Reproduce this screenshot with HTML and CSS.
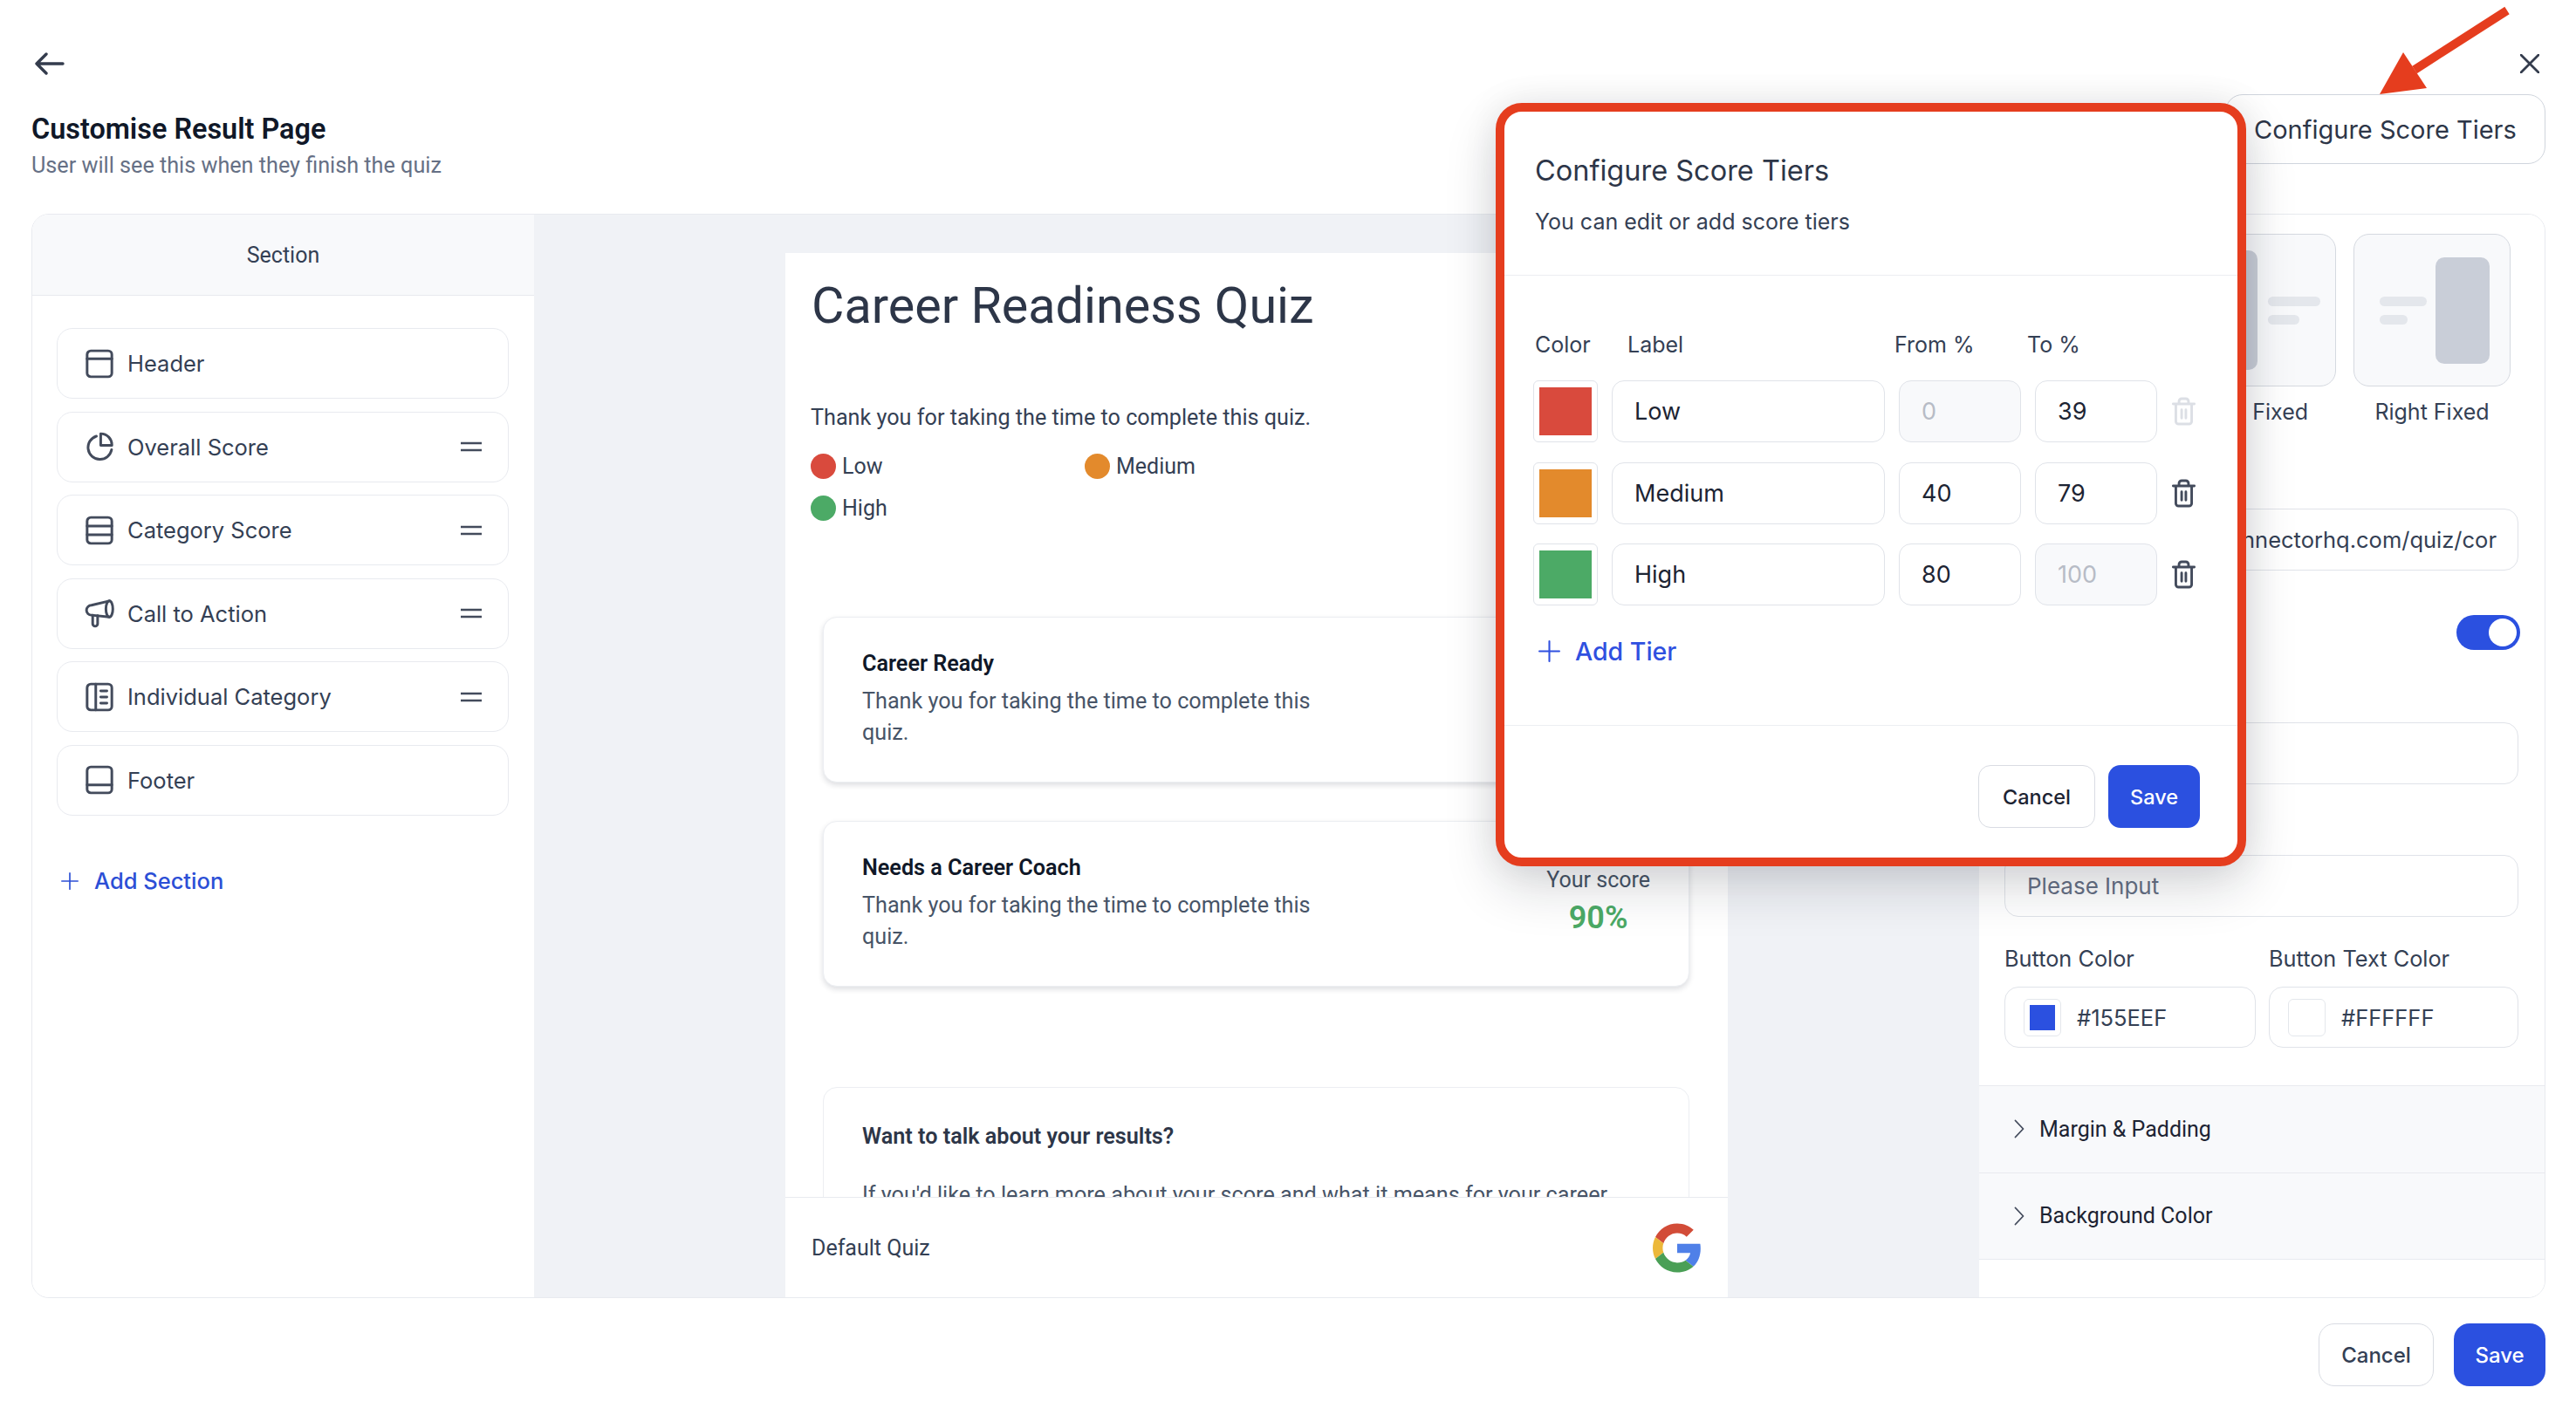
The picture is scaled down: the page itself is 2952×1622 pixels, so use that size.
FILE: index.html
```html
<!DOCTYPE html>
<html lang="en">
<head>
<meta charset="utf-8">
<title>Customise Result Page</title>
<link rel="stylesheet" href="styles.css">
</head>
<body>
<svg class="defs" width="0" height="0" aria-hidden="true">
  <symbol id="trash" viewBox="0 0 24 27"><path d="M2 6.500h20M7.500 6.500V4A2.500 2.500 0 0 1 10 1.500h4A2.500 2.500 0 0 1 16.500 4v2.500M4.500 6.500v16.500A2.500 2.500 0 0 0 7 25.500h10a2.500 2.500 0 0 0 2.500-2.500V6.500M10 12v8M14 12v8"/></symbol>
  <symbol id="burger" viewBox="0 0 24 12"><path d="M0 2h24M0 10h24"/></symbol>
  <symbol id="plus" viewBox="0 0 24 24"><path d="M12 1v22M1 12h22"/></symbol>
  <symbol id="chev" viewBox="0 0 12 22"><path d="M1.500 1.500 10.500 11l-9 9.500"/></symbol>
</svg>
<div class="app">
  <div class="toprow">
    <svg class="back" viewBox="0 0 34 26"><path d="M32 13H2M13 2 2 13l11 11"/></svg>
    <svg class="close" viewBox="0 0 22 22"><path d="M1 1l20 20M21 1 1 21"/></svg>
  </div>
  <div class="headrow">
    <div class="headtext">
      <h1 class="pagetitle">Customise Result Page</h1>
      <p class="pagesub">User will see this when they finish the quiz</p>
    </div>
    <button class="tierbtn">Configure Score Tiers</button>
  </div>

  <div class="workspace">
    <aside class="sidebar">
      <div class="sidehead">Section</div>
      <div class="sidelist">
        <div class="item">
          <svg class="itemicon" viewBox="0 0 24 24"><rect x="2" y="1.500" width="20" height="21" rx="3"/><path d="M2 8h20"/></svg>
          <span class="itemname">Header</span>
        </div>
        <div class="item">
          <svg class="itemicon" viewBox="0 0 24 24"><path d="M9.500 3.500A9.600 9.600 0 1 0 21.800 14.500"/><path d="M13 1.500v9.500h9a9 9 0 0 0-9-9.500z"/></svg>
          <span class="itemname">Overall Score</span>
          <svg class="burger"><use href="#burger"/></svg>
        </div>
        <div class="item">
          <svg class="itemicon" viewBox="0 0 24 24"><rect x="2" y="1.500" width="20" height="21" rx="3"/><path d="M2 8.500h20M2 15.500h20"/></svg>
          <span class="itemname">Category Score</span>
          <svg class="burger"><use href="#burger"/></svg>
        </div>
        <div class="item">
          <svg class="itemicon" viewBox="0 0 24 24"><ellipse cx="20" cy="8.500" rx="2.800" ry="6.500"/><path d="M20 2 5.500 5.500A4 4 0 0 0 5.500 13.500L20 15"/><path d="M6.500 13.500v7a2 2 0 0 0 2 2h0a2 2 0 0 0 2-2v-6.500"/></svg>
          <span class="itemname">Call to Action</span>
          <svg class="burger"><use href="#burger"/></svg>
        </div>
        <div class="item">
          <svg class="itemicon" viewBox="0 0 24 24"><rect x="2" y="1.500" width="20" height="21" rx="3"/><path d="M9 1.500v21M13 7h5M13 12h5M13 17h5"/></svg>
          <span class="itemname">Individual Category</span>
          <svg class="burger"><use href="#burger"/></svg>
        </div>
        <div class="item">
          <svg class="itemicon" viewBox="0 0 24 24"><rect x="2" y="1.500" width="20" height="21" rx="3"/><path d="M2 16h20"/></svg>
          <span class="itemname">Footer</span>
        </div>
        <div class="addsection">
          <svg class="plus"><use href="#plus"/></svg>
          <span>Add Section</span>
        </div>
      </div>
    </aside>

    <main class="canvas">
      <div class="preview">
        <div class="previewscroll">
          <h2 class="quiztitle">Career Readiness Quiz</h2>
          <p class="quizintro">Thank you for taking the time to complete this quiz.</p>
          <div class="legend">
            <div class="legenditem"><span class="dot dot-low"></span>Low</div>
            <div class="legenditem"><span class="dot dot-med"></span>Medium</div>
            <div class="legenditem"><span class="dot dot-high"></span>High</div>
          </div>
          <section class="card card-first">
            <div class="cardbody">
              <h3 class="cardtitle">Career Ready</h3>
              <p class="cardtext">Thank you for taking the time to complete this quiz.</p>
            </div>
          </section>
          <section class="card card-second">
            <div class="cardbody">
              <h3 class="cardtitle">Needs a Career Coach</h3>
              <p class="cardtext">Thank you for taking the time to complete this quiz.</p>
            </div>
            <div class="score"><div class="scorelabel">Your score</div><div class="scoreval">90%</div></div>
          </section>
          <section class="card card-third">
            <div class="cardbody cardbody-wide">
              <h3 class="cardtitle cardtitle-soft">Want to talk about your results?</h3>
              <p class="cardtext cardtext-gap">If you'd like to learn more about your score and what it means for your career</p>
            </div>
          </section>
        </div>
        <div class="previewfoot">
          <span class="footname">Default Quiz</span>
          <svg class="glogo" viewBox="0 0 48 48">
            <path fill="#d24c38" d="M24 9.500c3.540 0 6.710 1.220 9.210 3.600l6.850-6.850C35.900 2.380 30.470 0 24 0 14.620 0 6.510 5.380 2.560 13.220l7.980 6.190C12.430 13.720 17.740 9.500 24 9.500z"/>
            <path fill="#4f80e8" d="M46.980 24.550c0-1.570-.150-3.090-.380-4.550H24v9.020h12.940c-.580 2.960-2.260 5.480-4.780 7.180l7.730 6c4.510-4.180 7.090-10.360 7.090-17.650z"/>
            <path fill="#ecb83a" d="M10.530 28.590c-.480-1.450-.760-2.990-.760-4.590s.270-3.140.760-4.590l-7.980-6.190C.920 16.460 0 20.120 0 24c0 3.880.920 7.540 2.560 10.780l7.970-6.190z"/>
            <path fill="#4a9f56" d="M24 48c6.480 0 11.930-2.130 15.890-5.810l-7.730-6c-2.150 1.450-4.920 2.300-8.160 2.300-6.260 0-11.570-4.220-13.470-9.910l-7.980 6.190C6.510 42.620 14.620 48 24 48z"/>
          </svg>
        </div>
      </div>
    </main>

    <aside class="settings">
      <div class="settingsmain">
        <div class="layouts">
          <div class="layoutopt">
            <div class="thumb thumb-top"><span class="tline tline-a"></span><span class="tline tline-b"></span></div>
          </div>
          <div class="layoutopt">
            <div class="thumb thumb-left"><span class="tblock tblock-left"></span><span class="tlines"><span class="tline tline-a"></span><span class="tline tline-b"></span></span></div>
            <div class="thumblabel">Left Fixed</div>
          </div>
          <div class="layoutopt">
            <div class="thumb thumb-right"><span class="tlines"><span class="tline tline-a"></span><span class="tline tline-b"></span></span><span class="tblock"></span></div>
            <div class="thumblabel">Right Fixed</div>
          </div>
        </div>
        <div class="field field-url">
          <div class="fieldlabel"></div>
          <div class="input input-url">https://app.quizconnectorhq.com/quiz/cor</div>
        </div>
        <div class="togglerow"><span class="fieldlabel"></span><span class="toggle"><span class="knob"></span></span></div>
        <div class="field field-text">
          <div class="fieldlabel"></div>
          <div class="input"></div>
        </div>
        <div class="field field-link">
          <div class="fieldlabel"></div>
          <div class="input input-ph">Please Input</div>
        </div>
        <div class="colors">
          <div class="colorcol colorcol-a">
            <div class="fieldlabel">Button Color</div>
            <div class="input input-color"><span class="miniswatch"><span class="miniswatchfill"></span></span>#155EEF</div>
          </div>
          <div class="colorcol colorcol-b">
            <div class="fieldlabel">Button Text Color</div>
            <div class="input input-color"><span class="miniswatch"></span>#FFFFFF</div>
          </div>
        </div>
      </div>
      <div class="accordion"><svg class="chev"><use href="#chev"/></svg>Margin &amp; Padding</div>
      <div class="accordion"><svg class="chev"><use href="#chev"/></svg>Background Color</div>
    </aside>
  </div>

  <div class="pagefoot">
    <button class="btn btn-cancel">Cancel</button>
    <button class="btn btn-save">Save</button>
  </div>

  <div class="modal">
    <div class="modalhead">
      <h2 class="modaltitle">Configure Score Tiers</h2>
      <p class="modalsub">You can edit or add score tiers</p>
    </div>
    <div class="modalbody">
      <div class="tierhead"><span class="th th-color">Color</span><span class="th th-label">Label</span><span class="th th-from">From %</span><span class="th">To %</span></div>
      <div class="tierrow">
        <div class="swatch"><span class="swatchfill fill-low"></span></div>
        <div class="tinput">Low</div>
        <div class="tinput tinput-off">0</div>
        <div class="tinput">39</div>
        <svg class="trash trash-off"><use href="#trash"/></svg>
      </div>
      <div class="tierrow">
        <div class="swatch"><span class="swatchfill fill-med"></span></div>
        <div class="tinput">Medium</div>
        <div class="tinput">40</div>
        <div class="tinput">79</div>
        <svg class="trash"><use href="#trash"/></svg>
      </div>
      <div class="tierrow">
        <div class="swatch"><span class="swatchfill fill-high"></span></div>
        <div class="tinput">High</div>
        <div class="tinput">80</div>
        <div class="tinput tinput-off">100</div>
        <svg class="trash"><use href="#trash"/></svg>
      </div>
      <div class="addtier"><svg class="plus plus-tier"><use href="#plus"/></svg><span>Add Tier</span></div>
    </div>
    <div class="modalfoot">
      <button class="mbtn mbtn-cancel">Cancel</button>
      <button class="mbtn mbtn-save">Save</button>
    </div>
  </div>

  <svg class="callout" viewBox="0 0 160 112"><path class="calloutshaft" d="M153 12 47 80"/><polygon class="callouthead" points="7,108 34,60 61,101"/></svg>
</div>
</body>
</html>
```

FILE: styles.css
```css
* { box-sizing: border-box; }
html, body { margin: 0; padding: 0; background: #fff; }
body { font-family: Inter, "Liberation Sans", sans-serif; color: #2d3648; }
h1, h2, h3, p { margin: 0; font-weight: 400; }
button { font-family: inherit; cursor: pointer; }
.defs { position: absolute; }

svg { fill: none; stroke: currentColor; stroke-linecap: round; stroke-linejoin: round; }

.app { position: relative; width: 2952px; height: 1622px; padding: 60px 35px 0 36px; overflow: hidden; }

.toprow { display: flex; justify-content: space-between; align-items: center; height: 25px; padding-left: 4px; padding-right: 7px; }
.back { width: 34px; height: 26px; stroke: #343c4d; stroke-width: 3.400; }
.close { width: 22px; height: 22px; stroke: #343c4d; stroke-width: 2.800; }

.headrow { display: flex; justify-content: space-between; align-items: flex-start; margin-top: 23px; height: 80px; }
.headtext { padding-top: 20px; }
.pagetitle { font-family: Roboto, sans-serif; font-size: 32.400px; line-height: 40px; font-weight: 600; color: #101828; }
.pagesub { font-family: Roboto, sans-serif; font-size: 25.200px; line-height: 36px; margin-top: 4px; color: #667085; }
.tierbtn { width: 367px; height: 80px; background: #fff; border: 1.500px solid #d0d5dd; border-radius: 20px; font-size: 29px; color: #2d3648; padding: 0 0 0 32px; text-align: left; }

.workspace { display: grid; grid-template-columns: 575px 1656px 648px; height: 1243px; margin-top: 57px; border: 1px solid #e8eaef; border-radius: 20px; overflow: hidden; }

.sidebar { background: #fff; }
.sidehead { height: 93px; display: flex; align-items: center; justify-content: center; background: #f8f9fb; border-bottom: 1.500px solid #e8eaef; font-family: Roboto, sans-serif; font-size: 25px; color: #344054; }
.sidelist { display: flex; flex-direction: column; gap: 14.600px; padding: 37px 29px 0 28px; }
.item { display: flex; align-items: center; height: 81px; padding: 0 30px 0 31px; border: 1.500px solid #e8eaef; border-radius: 18px; background: #fff; }
.itemicon { width: 34px; height: 34px; margin-right: 15px; stroke: #434b5c; stroke-width: 2.100; flex: none; }
.itemname { flex: 1; font-size: 25.500px; color: #344054; }
.burger { width: 24px; height: 12px; stroke: #434b5c; stroke-width: 2.500; flex: none; stroke-linecap: butt; }
.addsection { display: flex; align-items: center; margin-top: 40px; padding-left: 5px; font-size: 25.500px; font-weight: 500; color: #2c4fd6; height: 40px; }
.plus { width: 20px; height: 20px; margin-right: 18px; stroke: #2c4fd6; stroke-width: 2; flex: none; }

.canvas { background: #f0f2f6; padding-top: 44px; display: flex; justify-content: center; min-height: 0; }
.preview { width: 1080px; height: 1198px; background: #fff; display: flex; flex-direction: column; font-family: Roboto, sans-serif; }
.previewscroll { height: 1082px; overflow: hidden; padding-top: 27px; }
.quiztitle { font-size: 57.500px; line-height: 68px; color: #2d3648; padding-left: 30px; }
.quizintro { font-size: 25.200px; line-height: 36px; margin-top: 76px; padding-left: 29px; color: #344054; }
.legend { display: grid; grid-template-columns: 314px 314px; row-gap: 18px; margin-top: 22px; padding-left: 29px; }
.legenditem { display: flex; align-items: center; height: 30px; font-size: 25px; color: #344054; }
.dot { width: 29px; height: 29px; border-radius: 50%; margin-right: 7px; }
.dot-low { background: #d94a3d; }
.dot-med { background: #e38a2c; }
.dot-high { background: #4caa66; }

.card { display: flex; justify-content: space-between; width: 993px; margin-left: 43px; padding: 36px 44px 38px 44px; background: #fff; border: 1.500px solid #eceef2; border-radius: 16px; box-shadow: 0 3px 6px rgba(16,24,40,.14); }
.card-first { margin-top: 110px; }
.card-second { margin-top: 44px; }
.card-third { margin-top: 115px; height: 260px; padding-top: 39px; box-shadow: none; }
.cardbody { width: 560px; }
.cardbody-wide { width: 900px; }
.cardtitle { font-size: 25.200px; line-height: 34px; font-weight: 600; color: #101828; }
.cardtitle-soft { color: #2d3648; }
.cardtext { font-size: 25.200px; line-height: 36px; margin-top: 8px; color: #475467; }
.cardtext-gap { margin-top: 32px; }
.score { text-align: center; padding-top: 13px; }
.scorelabel { font-size: 25px; line-height: 36px; color: #475467; }
.scoreval { font-size: 36px; line-height: 46px; font-weight: 600; color: #4caa66; margin-top: 2px; }

.previewfoot { height: 116px; display: flex; align-items: center; justify-content: space-between; padding: 0 30px; border-top: 1.500px solid #e8eaef; background: #fff; border-bottom: 1px solid #e8eaef; }
.footname { font-size: 25px; color: #344054; }
.glogo { width: 56px; height: 57px; stroke: none; }

.settings { background: #fff; display: flex; flex-direction: column; }
.settingsmain { padding: 22px 30px 44px 29px; height: 998px; }
.layouts { display: flex; gap: 20px; }
.layoutopt { width: 180px; }
.thumb { height: 175px; background: #f8f9fb; border: 1.500px solid #d5d9e0; border-radius: 18px; display: flex; align-items: center; }
.thumb-top { flex-direction: column; justify-content: center; gap: 10px; }
.thumb-left { padding-left: 28px; gap: 12px; }
.thumb-right { padding-left: 29px; gap: 10px; }
.tblock { width: 62px; height: 122px; background: #c9ced8; border-radius: 10px; flex: none; }
.tblock-left { width: 61px; height: 137px; }
.tlines { display: flex; flex-direction: column; gap: 10px; }
.tline { display: block; height: 11px; border-radius: 6px; background: #e4e7ec; }
.tline-a { width: 54px; }
.tline-b { width: 32px; }
.thumb-left .tline-a { width: 60px; }
.thumb-left .tline-b { width: 36px; }
.thumblabel { text-align: center; font-size: 25px; line-height: 36px; margin-top: 11px; color: #344054; }

.fieldlabel { font-size: 25.300px; line-height: 32px; min-height: 32px; color: #344054; }
.input { height: 71px; display: flex; align-items: center; padding: 0 25px; background: #fff; border: 1.500px solid #e0e3e9; border-radius: 16px; font-size: 25.500px; color: #344054; white-space: nowrap; overflow: hidden; }
.field .fieldlabel { margin-bottom: 11px; }
.field-url { margin-top: 50px; }
.input-url { justify-content: flex-end; padding-right: 24px; }
.togglerow { display: flex; justify-content: space-between; align-items: center; height: 40px; margin-top: 51px; margin-right: -2px; }
.toggle { width: 73px; height: 40px; background: #2b50e0; border-radius: 20px; display: flex; justify-content: flex-end; align-items: center; padding-right: 4px; }
.knob { width: 32px; height: 32px; background: #fff; border-radius: 50%; }
.field-text { margin-top: 40px; }
.field-link { margin-top: 38px; }
.input-ph { color: #667085; font-size: 26px; }
.colors { display: grid; grid-template-columns: 288px 286px; column-gap: 15px; margin-top: 32px; }
.colorcol .fieldlabel { margin-bottom: 16px; }
.input-color { height: 70px; padding-left: 21px; }
.miniswatch { width: 43px; height: 43px; border: 1.500px solid #e4e7ec; border-radius: 6px; margin-right: 18px; display: flex; align-items: center; justify-content: center; flex: none; }
.miniswatchfill { width: 29px; height: 29px; background: #2b50e0; }

.accordion { height: 99.500px; display: flex; align-items: center; padding-left: 40px; background: #f8f9fb; border-top: 1.500px solid #e8eaef; font-family: Roboto, sans-serif; font-size: 25px; color: #1d2433; }
.accordion:last-child { border-bottom: 1.500px solid #e8eaef; height: 100px; }
.chev { width: 12px; height: 22px; margin-right: 17px; stroke: #434b5c; stroke-width: 1.800; flex: none; }

.pagefoot { display: flex; justify-content: flex-end; gap: 23px; padding-top: 29px; }
.btn { height: 72px; border-radius: 18px; font-size: 24px; font-weight: 500; }
.btn-cancel { width: 132px; background: #fff; border: 1.500px solid #d9dce3; color: #344054; }
.btn-save { width: 105px; background: #2b50e0; border: 0; color: #fff; }

.modal { position: absolute; left: 1714px; top: 118px; width: 860px; height: 875px; background: #fff; border: 10px solid #e53d1e; border-radius: 30px; display: flex; flex-direction: column; box-shadow: 0 24px 60px rgba(16,24,40,.16), 0 0 40px rgba(16,24,40,.08); }
.modalhead { padding: 46px 35px 43px; border-bottom: 1.500px solid #eceef2; }
.modaltitle { font-size: 32.500px; line-height: 44px; font-weight: 400; color: #2d3648; }
.modalsub { font-size: 25px; line-height: 36px; margin-top: 18px; color: #344054; }
.modalbody { flex: 1; padding: 63px 33px 0; }
.tierhead { display: flex; height: 32px; align-items: center; padding-left: 2px; margin-bottom: 25px; }
.th { font-size: 25px; color: #344054; }
.th-color { width: 106px; }
.th-label { width: 306px; }
.th-from { width: 152px; }
.tierrow { display: grid; grid-template-columns: 74px 313px 140px 140px 29px; column-gap: 16px; align-items: center; height: 71px; margin-bottom: 22.500px; }
.swatch { height: 71px; padding: 7px 6px; border: 1.500px solid #e0e3e9; border-radius: 6px; display: flex; }
.swatchfill { flex: 1; }
.fill-low { background: #d94a3d; }
.fill-med { background: #e38a2c; }
.fill-high { background: #4caa66; }
.tinput { height: 71px; display: flex; align-items: center; padding-left: 25px; border: 1.500px solid #e0e3e9; border-radius: 14px; font-size: 27px; color: #1d2433; background: #fff; }
.tinput-off { background: #f8f9fb; color: #b7bcc6; }
.trash { width: 29px; height: 33px; stroke: #434b5c; stroke-width: 2.400; }
.trash-off { stroke: #dcdfe5; }
.addtier { display: flex; align-items: center; height: 40px; margin-top: 32px; padding-left: 6px; font-size: 28.500px; font-weight: 500; color: #2f50e0; }
.plus-tier { width: 25px; height: 25px; margin-right: 17px; stroke: #2f50e0; }
.modalfoot { display: flex; justify-content: flex-end; gap: 15px; height: 152px; padding: 45px 43px 0 0; border-top: 1.500px solid #eceef2; }
.mbtn { height: 72px; border-radius: 14px; font-size: 23.500px; font-weight: 500; }
.mbtn-cancel { width: 134px; background: #fff; border: 1.500px solid #d9dce3; color: #1d2433; }
.mbtn-save { width: 105px; background: #2b50e0; border: 0; color: #fff; }

.callout { position: absolute; left: 2720px; top: 0; width: 160px; height: 112px; }
.calloutshaft { stroke: #e53d1e; stroke-width: 10; stroke-linecap: butt; }
.callouthead { fill: #e53d1e; stroke: none; }
```
